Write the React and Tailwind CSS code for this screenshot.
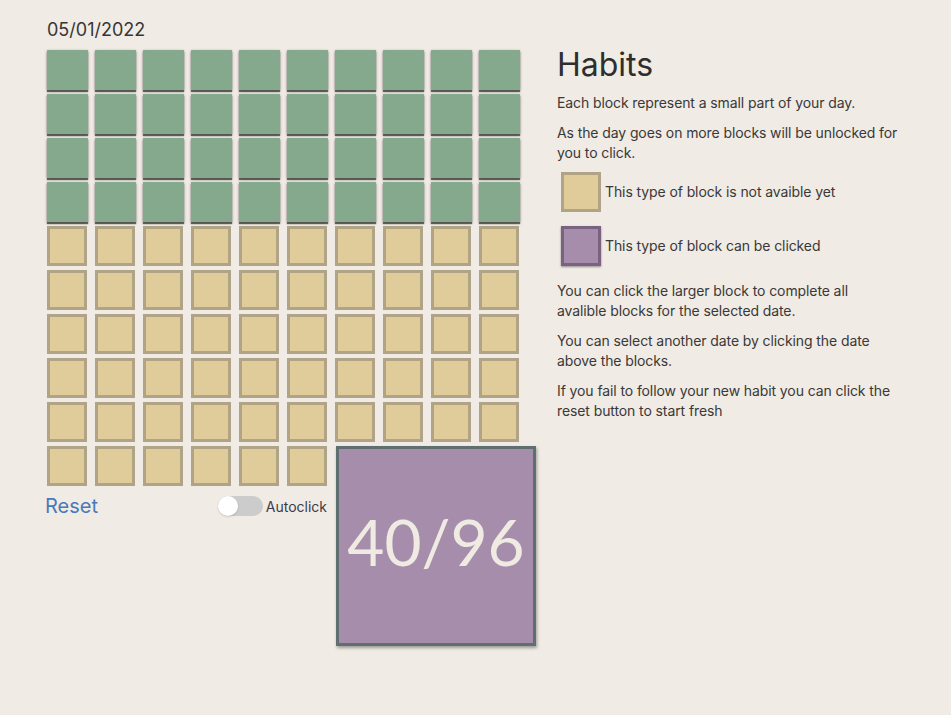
export default function App() {
  /* Data */

  // 96 blocks in a day, 40 of them done
  const done = 40;
  const total = 96;
  const rows = Array.from({ length: 9 }, (_, r) => r);
  const cols = Array.from({ length: 10 }, (_, c) => c);

  // Blocks

  const Done = () => (
    <div className="w-[41px] h-10 bg-[#84a98c] shadow-[0_1px_3px_rgba(0,0,0,0.3),0_2px_1px_rgba(0,0,0,0.55)]" />
  );

  const Locked = () => (
    <div className="w-10 h-10 bg-[#e0cb9a] border-[3px] border-[#b1a385]" />
  );

  // Main Page

  return (
    <div className="min-h-screen bg-[#f0ebe4] flex text-[#3a3838] font-['Inter',sans-serif]">
      {/* Left side: date + blocks */}
      <div className="w-[510px] ml-[47px] shrink-0">
        <p className="mt-[19px] h-[31px] text-[18px] leading-[22px] text-[#363636]">
          05/01/2022
        </p>

        <div className="grid grid-cols-[repeat(10,40px)] gap-x-2 gap-y-1">
          {rows.map((r) =>
            cols.map((c) => {
              const i = r * 10 + c;
              return i < done ? <Done key={i} /> : <Locked key={i} />;
            })
          )}
        </div>

        <div className="mt-1 flex gap-2 items-start">
          <div className="w-[280px]">
            <div className="flex gap-2">
              {cols.slice(0, 6).map((c) => (
                <Locked key={c} />
              ))}
            </div>

            <div className="mt-[10px] h-5 flex items-center justify-between">
              <button className="-ml-[2px] text-[20px] leading-5 text-[#4a79b9]">
                Reset
              </button>
              <div className="flex items-center gap-[3px]">
                <div className="w-[45px] h-5 rounded-full bg-[#cccccc] flex items-center">
                  <div className="w-5 h-5 rounded-full bg-white shadow-[0_1px_2px_rgba(0,0,0,0.15)]" />
                </div>
                <span className="text-[14px] text-[#3b3a4c]">Autoclick</span>
              </div>
            </div>
          </div>

          <div className="ml-px w-[200px] h-[200px] pb-2 bg-[#a68dac] border-[3px] border-[#5f6e6e] shadow-[1px_2px_3px_rgba(0,0,0,0.35)] flex items-center justify-center">
            <span className="text-[64px] font-normal text-[#efeae2] font-['Lato',sans-serif]">
              {done}/{total}
            </span>
          </div>
        </div>
      </div>

      {/* Right side: explanation */}
      <div className="w-[343px] pt-[46px] text-[14px] leading-5 tracking-[-0.1px]">
        <h1 className="text-[32px] leading-[38px] text-[#2e2e2e] tracking-normal">Habits</h1>

        <p className="mt-[9px]">Each block represent a small part of your day.</p>
        <p className="mt-[10px]">
          As the day goes on more blocks will be unlocked for you to click.
        </p>

        <div className="mt-[9px] ml-1 flex items-center gap-1">
          <div className="w-10 h-10 bg-[#e0cb9a] border-[3px] border-[#b1a385]" />
          <span>This type of block is not avaible yet</span>
        </div>

        <div className="mt-[14px] ml-1 flex items-center gap-1">
          <div className="w-10 h-10 bg-[#a68dac] border-[3px] border-[#7a6280] shadow-[0_1px_2px_rgba(0,0,0,0.4)]" />
          <span>This type of block can be clicked</span>
        </div>

        <p className="mt-[15px]">
          You can click the larger block to complete all avalible blocks for the
          selected date.
        </p>
        <p className="mt-[10px]">
          You can select another date by clicking the date above the blocks.
        </p>
        <p className="mt-[10px]">
          If you fail to follow your new habit you can click the reset button to
          start fresh
        </p>
      </div>
    </div>
  );
}
